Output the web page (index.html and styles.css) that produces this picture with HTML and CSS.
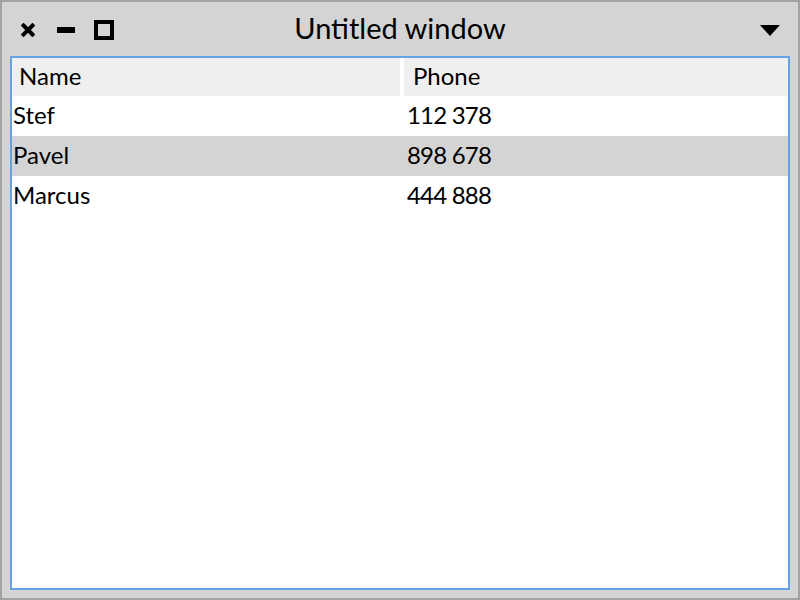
FILE: index.html
```html
<!DOCTYPE html>
<html>
<head>
<meta charset="utf-8">
<link rel="stylesheet" href="styles.css">
</head>
<body>
<div class="window">
  <div class="titlebar">
    <div class="controls">
      <svg class="ic-close" width="14" height="14" viewBox="0 0 14 14"><path d="M2.5 2.5 L11.5 11.5 M11.5 2.5 L2.5 11.5" stroke="#000" stroke-width="4" stroke-linecap="square"/></svg>
      <svg class="ic-min" width="18" height="6" viewBox="0 0 18 6"><rect x="0" y="0" width="18" height="6" fill="#000"/></svg>
      <svg class="ic-max" width="20" height="20" viewBox="0 0 20 20"><rect x="2" y="2" width="16" height="16" fill="none" stroke="#000" stroke-width="4"/></svg>
    </div>
    <div class="title">Untitled window</div>
    <div class="menu">
      <svg width="20" height="11" viewBox="0 0 20 11"><polygon points="0,0 20,0 10,11" fill="#000"/></svg>
    </div>
  </div>
  <div class="content">
    <div class="thead">
      <div class="th">Name</div>
      <div class="th">Phone</div>
    </div>
    <div class="row">
      <div class="td name">Stef</div>
      <div class="td phone">112 378</div>
    </div>
    <div class="row selected">
      <div class="td name">Pavel</div>
      <div class="td phone">898 678</div>
    </div>
    <div class="row">
      <div class="td name">Marcus</div>
      <div class="td phone">444 888</div>
    </div>
  </div>
</div>
</body>
</html>
```
FILE: styles.css
```css
* { box-sizing: border-box; }
html, body { margin: 0; padding: 0; }
body {
  width: 800px;
  height: 600px;
  font-family: Lato, "Liberation Sans", sans-serif;
  color: #000;
}
.window {
  width: 800px;
  height: 600px;
  border: 2px solid #a3a3a3;
  background: #d4d4d4;
  display: flex;
  flex-direction: column;
}
.titlebar {
  height: 54px;
  display: grid;
  grid-template-columns: 1fr auto 1fr;
  align-items: center;
}
.controls {
  display: flex;
  align-items: center;
  padding-left: 19px;
  padding-top: 2px;
}
.controls svg { display: block; }
.ic-min { margin-left: 22px; }
.ic-max { margin-left: 19px; }
.title {
  font-size: 29px;
  line-height: 34px;
  padding-bottom: 3px;
}
.menu {
  display: flex;
  justify-content: flex-end;
  padding-right: 18px;
  padding-top: 2px;
}
.menu svg { display: block; }
.content {
  flex: 1;
  margin: 0 8px 8px 8px;
  border: 2px solid #66a2e0;
  background: #fff;
}
.thead {
  display: grid;
  grid-template-columns: 388px 1fr;
  column-gap: 4px;
  height: 38px;
  background: #fff;
}
.th {
  background: #efefef;
  font-size: 24px;
  line-height: 36px;
  padding-left: 7px;
}
.thead .th:nth-child(2) { padding-left: 9px; }
.row {
  display: grid;
  grid-template-columns: 392px 1fr;
  height: 40px;
}
.row.selected { background: #d4d4d4; }
.td {
  font-size: 24px;
  line-height: 38px;
}
.td.name { padding-left: 1px; }
.td.phone { padding-left: 3px; letter-spacing: -0.8px; }
```
